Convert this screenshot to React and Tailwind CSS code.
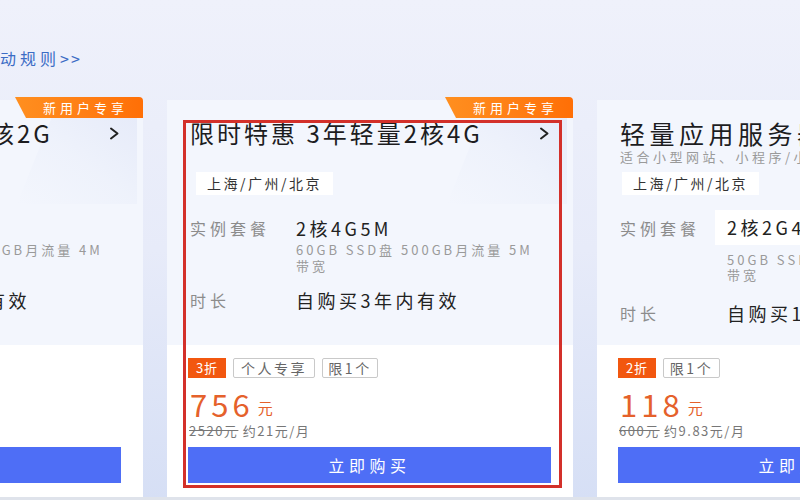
import React from "react";

function Chevron() {
  return (
    <svg width="11" height="13" viewBox="0 0 11 13" className="shrink-0">
      <path d="M2 1.5 L8.5 6.5 L2 11.5" fill="none" stroke="#222" strokeWidth="2" strokeLinecap="round" strokeLinejoin="round" />
    </svg>
  );
}

function Badge() {
  return (
    <div className="absolute top-[-3px] right-0 w-[128px] h-[21px] rounded-tr-[4px] bg-gradient-to-r from-[#ff8f1f] to-[#ff6f06] [clip-path:polygon(0_0,100%_0,100%_100%,11px_100%)] flex items-center justify-end pr-[15px]">
      <span className="text-[13px] leading-[21px] tracking-[4px] text-white">新用户专享</span>
    </div>
  );
}

function Deco() {
  return (
    <div className="absolute right-[6px] top-[14px] w-[120px] h-[90px] bg-gradient-to-bl from-[#e3e8f8] via-[#edf1fb] to-transparent [clip-path:polygon(30%_0,100%_0,100%_100%,0_100%)] opacity-80" />
  );
}

function Bottom({ tags, price, original, monthly }) {
  return (
    <div className="flex-1 bg-white pl-[21px] pr-[22px] pt-[13px]">
      <div className="flex gap-[7px] h-[20px]">
        {tags.map((t, i) =>
          i === 0 ? (
            <span key={i} className="w-[38px] h-[20px] bg-[#f2570f] text-white text-[13px] leading-[20px] tracking-[1px] text-center">
              {t.text}
            </span>
          ) : (
            <span key={i} className={`${t.w} h-[20px] border border-[#c9c9c9] rounded-[2px] text-[#666] text-[14px] leading-[18px] tracking-[2.5px] text-center`}>
              {t.text}
            </span>
          )
        )}
      </div>
      <div className="mt-[8px] ml-[2px] flex items-end h-[36px]">
        <span className="text-[31px] leading-[36px] tracking-[4px] text-[#e5612b]">{price}</span>
        <span className="ml-[4px] mb-[5px] text-[15px] leading-[18px] text-[#e5612b]">元</span>
      </div>
      <div className="ml-[1px] text-[13px] leading-[18px] tracking-[1.5px] text-[#777] whitespace-nowrap">
        <span className="line-through">{original}</span> {monthly}
      </div>
      <div className="mt-[7px] h-[36px] bg-[#4e6ef6] flex items-center justify-center text-white text-[16px] tracking-[4.5px]">
        立即购买
      </div>
    </div>
  );
}

function PromoCard({ title, spec, sub, duration, bottom, highlight }) {
  return (
    <div className="relative w-[406px] h-[397px] shrink-0 flex flex-col">
      <div className="relative h-[245px] bg-[#f3f6fd] pl-[23px] pr-[23px] pt-[17px]">
        <Deco />
        <div className="relative flex items-center justify-between h-[32px]">
          <span className="text-[24px] leading-[32px] tracking-[3px] text-[#1d1d1f] whitespace-nowrap">{title}</span>
          <Chevron />
        </div>
        <div className="relative mt-[23px] ml-[6px] inline-block h-[23px] px-[11px] bg-white text-[14px] leading-[23px] tracking-[2.5px] text-[#333]">
          上海/广州/北京
        </div>
        <div className="flex mt-[21px]">
          <div className="w-[106px] shrink-0 text-[16px] leading-[24px] tracking-[4px] text-[#8c8c8c]">实例套餐</div>
          <div>
            <div className="text-[18px] leading-[24px] tracking-[3.5px] text-[#222]">{spec}</div>
            <div className="mt-[2px] text-[13px] leading-[16px] tracking-[3px] text-[#9a9a9a] whitespace-nowrap">
              {sub}
              <br />
              带宽
            </div>
          </div>
        </div>
        <div className="flex mt-[14px]">
          <div className="w-[106px] shrink-0 text-[16px] leading-[24px] tracking-[4px] text-[#8c8c8c]">时长</div>
          <div className="text-[18px] leading-[24px] tracking-[3.5px] text-[#222] whitespace-nowrap">{duration}</div>
        </div>
      </div>
      {bottom}
      <Badge />
      {highlight && (
        <div className="absolute left-[16px] top-[20px] w-[379px] h-[368px] border-[3px] border-[#d3302a] pointer-events-none" />
      )}
    </div>
  );
}

function ServerCard() {
  return (
    <div className="relative w-[406px] h-[397px] shrink-0 flex flex-col">
      <div className="relative h-[245px] bg-[#f3f6fd] pl-[23px] pt-[18px]">
        <div className="text-[25px] leading-[30px] tracking-[4.5px] text-[#1d1d1f] whitespace-nowrap">轻量应用服务器 2核2G4M</div>
        <div className="text-[13px] leading-[18px] tracking-[3.5px] text-[#9a9a9a] whitespace-nowrap">
          适合小型网站、小程序/小游戏、开发测试环境
        </div>
        <div className="mt-[6px] ml-[2px] inline-block h-[23px] px-[11px] bg-white text-[14px] leading-[23px] tracking-[2.5px] text-[#333]">
          上海/广州/北京
        </div>
        <div className="flex items-center mt-[15px]">
          <div className="w-[95px] shrink-0 text-[16px] leading-[24px] tracking-[4px] text-[#8c8c8c]">实例套餐</div>
          <div className="flex-1 h-[35px] bg-white pl-[12px] flex items-center text-[18px] tracking-[3.5px] text-[#222] whitespace-nowrap">
            2核2G4M
          </div>
        </div>
        <div className="mt-[7px] pl-[107px] text-[13px] leading-[15px] tracking-[3px] text-[#9a9a9a] whitespace-nowrap">
          50GB SSD盘 300GB月流量 4M
          <br />
          带宽
        </div>
        <div className="flex mt-[19px]">
          <div className="w-[107px] shrink-0 text-[16px] leading-[24px] tracking-[4px] text-[#8c8c8c]">时长</div>
          <div className="text-[18px] leading-[24px] tracking-[3.5px] text-[#222] whitespace-nowrap">自购买1年内有效</div>
        </div>
      </div>
      <Bottom
        tags={[{ text: "2折" }, { text: "限1个", w: "w-[57px]" }]}
        price="118"
        original="600元"
        monthly="约9.83元/月"
      />
    </div>
  );
}

export default function App() {
  return (
    <div className="relative w-[800px] h-[500px] overflow-hidden bg-gradient-to-b from-[#eff1fb] via-[#e7ebf9] to-[#d6dff5] font-['Noto_Sans_CJK_SC','Noto_Sans',sans-serif]">
      <div className="h-[100px] pt-[48px]">
        <div className="ml-[-20px] text-[16px] leading-[20px] text-[#3b6cc5] whitespace-nowrap">
          <span className="tracking-[4px]">活动规则</span>
          <span className="tracking-[2px]">&gt;&gt;</span>
        </div>
      </div>
      <div className="flex gap-[24px] ml-[-263px]">
        <PromoCard
          title="限时特惠 1年轻量2核2G"
          spec="2核2G4M"
          sub="40GB SSD盘 300GB月流量 4M"
          duration="自购买1年内有效"
          bottom={
            <Bottom
              tags={[{ text: "3折" }, { text: "个人专享", w: "w-[82px]" }, { text: "限1个", w: "w-[56px]" }]}
              price="288"
              original="960元"
              monthly="约24元/月"
            />
          }
        />
        <PromoCard
          title="限时特惠 3年轻量2核4G"
          spec="2核4G5M"
          sub="60GB SSD盘 500GB月流量 5M"
          duration="自购买3年内有效"
          highlight
          bottom={
            <Bottom
              tags={[{ text: "3折" }, { text: "个人专享", w: "w-[82px]" }, { text: "限1个", w: "w-[56px]" }]}
              price="756"
              original="2520元"
              monthly="约21元/月"
            />
          }
        />
        <ServerCard />
      </div>
      <div className="h-[3px] bg-[#dfe3eb]" />
    </div>
  );
}
